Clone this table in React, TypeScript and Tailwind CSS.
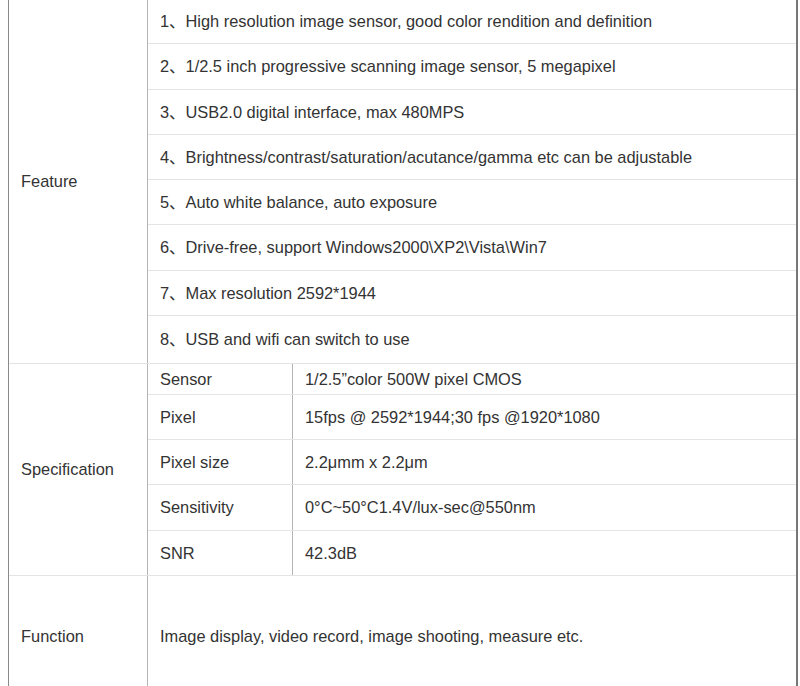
const features: [string, string][] = [
  ["1、", "High resolution image sensor, good color rendition and definition"],
  ["2、", "1/2.5 inch progressive scanning image sensor, 5 megapixel"],
  ["3、", "USB2.0 digital interface, max 480MPS"],
  ["4、", "Brightness/contrast/saturation/acutance/gamma etc can be adjustable"],
  ["5、", "Auto white balance, auto exposure"],
  ["6、", "Drive-free, support Windows2000\\XP2\\Vista\\Win7"],
  ["7、", "Max resolution 2592*1944"],
  ["8、", "USB and wifi can switch to use"],
];
const featureHeights = ["h-[45px]", "h-[46px]", "h-[45px]", "h-[45px]", "h-[45px]", "h-[46px]", "h-[45px]", "h-[47px]"];

const specs: [string, string, string][] = [
  ["Sensor", "1/2.5\u201dcolor 500W pixel CMOS", "h-[31px]"],
  ["Pixel", "15fps @ 2592*1944;30 fps @1920*1080", "h-[45px]"],
  ["Pixel size", "2.2\u03bcmm x 2.2\u03bcm", "h-[45px]"],
  ["Sensitivity", "0\u00b0C~50\u00b0C1.4V/lux-sec@550nm", "h-[46px]"],
  ["SNR", "42.3dB", "h-[44px]"],
];

export default function App() {
  return (
    <div className="w-[800px] h-[686px] overflow-hidden bg-white font-['Liberation_Sans','Noto_Sans_CJK_SC',sans-serif] text-[16.4px] text-[#333]">
      <div className="ml-[8px] -mt-[1px] w-[790px] border-l border-[#8a8a8a] border-r-2 border-r-[#777]">
        {/* feature */}
        <div className="flex border-b border-[#e4e4e4]">
          <div className="w-[139px] shrink-0 border-r border-[#b4b4b4] flex items-center pl-3">Feature</div>
          <div className="flex-1 flex flex-col">
            {features.map(([n, t], i) => (
              <div
                key={n}
                className={`${featureHeights[i]} flex items-center pl-3 ${i < features.length - 1 ? "border-b border-[#e4e4e4]" : ""}`}
              >
                <span>{n}</span>
                <span>{t}</span>
              </div>
            ))}
          </div>
        </div>

        {/* specification */}
        <div className="flex border-b border-[#e4e4e4]">
          <div className="w-[139px] shrink-0 border-r border-[#b4b4b4] flex items-center pl-3">Specification</div>
          <div className="flex-1 flex flex-col">
            {specs.map(([k, v, h], i) => (
              <div key={k} className={`${h} flex ${i < specs.length - 1 ? "border-b border-[#e4e4e4]" : ""}`}>
                <div className="w-[145px] shrink-0 border-r border-[#b4b4b4] flex items-center pl-3">{k}</div>
                <div className="flex-1 flex items-center pl-3">{v}</div>
              </div>
            ))}
          </div>
        </div>

        {/* function */}
        <div className="flex h-[121px]">
          <div className="w-[139px] shrink-0 border-r border-[#b4b4b4] flex items-center pl-3">Function</div>
          <div className="flex-1 flex items-center pl-3">Image display, video record, image shooting, measure etc.</div>
        </div>
      </div>
    </div>
  );
}
